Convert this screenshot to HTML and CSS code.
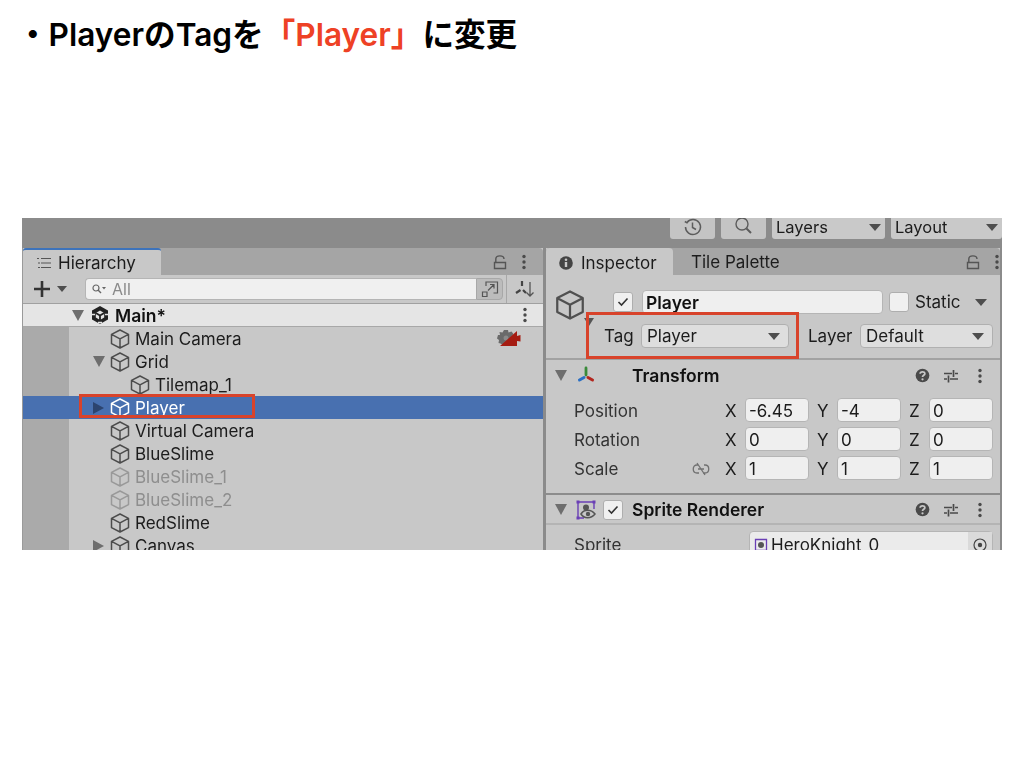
FILE: index.html
```html
<!DOCTYPE html>
<html lang="ja">
<head>
<meta charset="UTF-8">
<title>PlayerのTagを変更</title>
<link rel="stylesheet" href="styles.css">
</head>
<body>
<svg class="defs" width="0" height="0">
  <symbol id="cube" viewBox="0 0 20 20">
    <path d="M10 1 18.500 5.400V14.600L10 19 1.500 14.600V5.400Z M2 5.700 10 9.900 18 5.700 M10 9.900V18.700" fill="none" stroke="currentColor" stroke-width="1.500" stroke-linejoin="round"/>
  </symbol>
  <symbol id="kebab" viewBox="0 0 6 16">
    <circle cx="3" cy="2.500" r="1.700" fill="currentColor"/><circle cx="3" cy="8" r="1.700" fill="currentColor"/><circle cx="3" cy="13.500" r="1.700" fill="currentColor"/>
  </symbol>
  <symbol id="lock" viewBox="0 0 14 16">
    <path d="M1.500 8.500H12.500V14.500H1.500Z M2.800 8.500V5C2.800 .8 11 .8 11 5" fill="none" stroke="currentColor" stroke-width="1.400"/>
  </symbol>
  <symbol id="sliders" viewBox="0 0 16 16">
    <path d="M1 5.500H9 M12 5.500H15 M10.500 2V9 M1 11H4 M7 11H15 M5.500 7.500V14.500" fill="none" stroke="currentColor" stroke-width="1.700"/>
  </symbol>
  <symbol id="help" viewBox="0 0 16 16">
    <circle cx="8" cy="8" r="7.300" fill="currentColor"/>
    <path d="M5.500 6.200C5.600 3.400 10.500 3.400 10.500 6.100 10.500 7.800 8 7.800 8 9.600" fill="none" stroke="#c8c8c8" stroke-width="1.900"/>
    <circle cx="8" cy="12" r="1.200" fill="#c8c8c8"/>
  </symbol>
</svg>

<h1 class="title">・PlayerのTagを<span class="accent">「Player」</span>に変更</h1>

<div class="shot">
  <div class="toolbar">
    <div class="tool-btn tool-icon">
      <svg width="20" height="20" viewBox="0 0 20 20"><path d="M4 5.500A7.500 7.500 0 1 1 2.500 10 M1.800 4.500 4 5.800 5.600 3.600 M9.500 5.500V10.500L13 12.500" fill="none" stroke="#5c5c5c" stroke-width="1.500"/></svg>
    </div>
    <div class="tool-btn tool-icon">
      <svg width="20" height="20" viewBox="0 0 20 20"><circle cx="8" cy="7" r="6" fill="none" stroke="#5c5c5c" stroke-width="1.400"/><path d="M12.500 11.500 17 16" stroke="#5c5c5c" stroke-width="2"/></svg>
    </div>
    <div class="tool-btn tool-menu layers">Layers<i class="caret"></i></div>
    <div class="tool-btn tool-menu layout">Layout<i class="caret"></i></div>
  </div>

  <div class="panels">
    <section class="panel hierarchy">
      <div class="tabbar">
        <div class="tab tab-active tab-blue">
          <svg class="tab-icon" width="16" height="12" viewBox="0 0 16 12"><path d="M5 1.500H15 M5 6H15 M5 10.500H15 M1 1.500H3 M2 6H4 M2 10.500H4" stroke="#555" stroke-width="1.200"/></svg>
          Hierarchy
        </div>
        <div class="tab-tools">
          <svg class="lock-icon" width="14" height="16"><use href="#lock"/></svg>
          <svg class="kebab-icon" width="6" height="16"><use href="#kebab"/></svg>
        </div>
      </div>
      <div class="search-bar">
        <div class="add-btn">
          <svg width="18" height="18" viewBox="0 0 18 18"><path d="M9 1V17 M1 9H17" stroke="#333" stroke-width="2.600"/></svg>
          <i class="caret"></i>
        </div>
        <div class="search">
          <svg width="15" height="10" viewBox="0 0 15 10"><circle cx="4" cy="4" r="3" fill="none" stroke="#666" stroke-width="1.200"/><path d="M6 6 9 9" stroke="#666" stroke-width="1.400"/><path d="M10 3H14L12 5.500Z" fill="#666"/></svg>
          <span>All</span>
        </div>
        <div class="scene-vis">
          <svg width="18" height="18" viewBox="0 0 18 18"><path d="M5 6V2H16.500V13H12.500 M1.500 12H6V16.500H1.500Z M7 10.500 13 4.500 M9 4.500H13V8.500" fill="none" stroke="#555" stroke-width="1.200"/></svg>
        </div>
        <div class="sort-btn">
          <svg width="20" height="18" viewBox="0 0 20 18"><path d="M7 1V6 M1 13 5.500 10 M8 10 11 13" stroke="#444" stroke-width="2.200"/><path d="M15 2V16 M11.500 12.500 15 16 18.500 12.500" fill="none" stroke="#555" stroke-width="1.300"/></svg>
        </div>
      </div>
      <div class="scene-row">
        <i class="arrow-down"></i>
        <svg class="unity-logo" width="20" height="20" viewBox="0 0 20 20"><path d="M10 1 18 5.500V14.500L10 19 2 14.500V5.500Z" fill="#222"/><path d="M10 5.500 14.200 8V12.500L10 15 5.800 12.500V8Z" fill="#e5e5e5"/><path d="M10 10.500V15 M10 10.500 5.800 8 M10 10.500 14.200 8" stroke="#222" stroke-width="1.800"/><path d="M1 9.500H5 M15 9.500H19 M8 17.500H12" stroke="#e5e5e5" stroke-width="1.500"/></svg>
        <strong>Main*</strong>
        <svg class="kebab-icon scene-kebab" width="6" height="16"><use href="#kebab"/></svg>
      </div>
      <div class="tree">
        <div class="row"><svg class="cube" width="20" height="20"><use href="#cube"/></svg>Main Camera
          <svg class="gizmo" width="24" height="20" viewBox="0 0 24 20"><path d="M7 1H11L11.500 3.500 14.500 2.500 16.500 5 14 8 6 16 3.500 14.500 1.500 14 2 11 0 9.500 1 6 3 6 2.500 3 5.500 3.500Z" fill="#6a6a6a"/><circle cx="9" cy="9" r="2.500" fill="#8a8a8a"/><path d="M20 2V7L23.500 6V12.500L20 12V17H3Z" fill="#a51c12"/></svg>
        </div>
        <div class="row"><i class="arrow-down"></i><svg class="cube" width="20" height="20"><use href="#cube"/></svg>Grid</div>
        <div class="row depth2"><svg class="cube" width="20" height="20"><use href="#cube"/></svg>Tilemap_1</div>
        <div class="row selected"><i class="arrow-right"></i><svg class="cube" width="20" height="20"><use href="#cube"/></svg>Player
          <div class="mark mark-player"></div>
        </div>
        <div class="row"><svg class="cube" width="20" height="20"><use href="#cube"/></svg>Virtual Camera</div>
        <div class="row"><svg class="cube" width="20" height="20"><use href="#cube"/></svg>BlueSlime</div>
        <div class="row off"><svg class="cube" width="20" height="20"><use href="#cube"/></svg>BlueSlime_1</div>
        <div class="row off"><svg class="cube" width="20" height="20"><use href="#cube"/></svg>BlueSlime_2</div>
        <div class="row"><svg class="cube" width="20" height="20"><use href="#cube"/></svg>RedSlime</div>
        <div class="row"><i class="arrow-right"></i><svg class="cube" width="20" height="20"><use href="#cube"/></svg>Canvas</div>
      </div>
    </section>

    <section class="panel inspector">
      <div class="tabbar">
        <div class="tab tab-active tab-inspector">
          <svg class="tab-icon" width="14" height="14" viewBox="0 0 14 14"><circle cx="7" cy="7" r="6.800" fill="#444"/><rect x="5.800" y="6" width="2.400" height="5" fill="#c8c8c8"/><circle cx="7" cy="3.800" r="1.300" fill="#c8c8c8"/></svg>
          Inspector
        </div>
        <div class="tab tab-palette">Tile Palette</div>
        <div class="tab-tools">
          <svg class="lock-icon" width="14" height="16"><use href="#lock"/></svg>
          <svg class="kebab-icon" width="6" height="16"><use href="#kebab"/></svg>
        </div>
      </div>

      <div class="object">
        <div class="object-icon">
          <svg class="big-cube" width="30" height="30"><use href="#cube"/></svg>
          <i class="arrow-down small"></i>
        </div>
        <div class="object-body">
          <div class="object-name">
            <label class="check"><svg width="12" height="10" viewBox="0 0 12 10"><path d="M1.500 5 4.500 8 10.500 1.500" fill="none" stroke="#333" stroke-width="1.600"/></svg></label>
            <div class="name-input">Player</div>
            <label class="check static-check"></label>
            <span class="static-label">Static</span>
            <i class="caret"></i>
          </div>
          <div class="object-tags">
            <span class="tag-label">Tag</span>
            <div class="select tag-select">Player<i class="caret"></i></div>
            <span class="layer-label">Layer</span>
            <div class="select layer-select">Default<i class="caret"></i></div>
            <div class="mark mark-tag"></div>
          </div>
        </div>
      </div>

      <div class="comp-head">
        <i class="arrow-down"></i>
        <svg class="axes" width="20" height="20" viewBox="0 0 20 20"><path d="M10 2V9" stroke="#3a8a3a" stroke-width="2.800" stroke-linecap="round"/><path d="M8 11.500 3.500 14" stroke="#2a6fc4" stroke-width="3" stroke-linecap="round"/><path d="M12 11.500 16.500 14" stroke="#b3261e" stroke-width="3" stroke-linecap="round"/></svg>
        <strong class="comp-title comp-title-far">Transform</strong>
        <div class="comp-tools">
          <svg width="15" height="15" class="comp-help"><use href="#help"/></svg>
          <svg width="16" height="16"><use href="#sliders"/></svg>
          <svg class="kebab-icon" width="6" height="16"><use href="#kebab"/></svg>
        </div>
      </div>
      <div class="fields">
        <div class="field-label">Position</div>
        <div class="axis"><span>X</span><div class="num">-6.45</div></div>
        <div class="axis"><span>Y</span><div class="num">-4</div></div>
        <div class="axis"><span>Z</span><div class="num">0</div></div>
        <div class="field-label">Rotation</div>
        <div class="axis"><span>X</span><div class="num">0</div></div>
        <div class="axis"><span>Y</span><div class="num">0</div></div>
        <div class="axis"><span>Z</span><div class="num">0</div></div>
        <div class="field-label">Scale
          <svg width="18" height="14" viewBox="0 0 18 14"><path d="M6 3H5C0 3 0 11 5 11H7 M12 3H13C18 3 18 11 13 11H11 M6 7H12 M5 1 13 13" fill="none" stroke="#707070" stroke-width="1.300"/></svg>
        </div>
        <div class="axis"><span>X</span><div class="num">1</div></div>
        <div class="axis"><span>Y</span><div class="num">1</div></div>
        <div class="axis"><span>Z</span><div class="num">1</div></div>
      </div>

      <div class="comp-head comp-sprite">
        <i class="arrow-down"></i>
        <svg class="sprite-icon" width="20" height="20" viewBox="0 0 20 20"><path d="M2 2H18 M2 2V18H8 M18 2V9" fill="none" stroke="#6a3fb5" stroke-width="1.400"/><path d="M0.500 0.500H3.500V3.500H0.500Z M16.500 0.500H19.500V3.500H16.500Z M0.500 16.500H3.500V19.500H0.500Z" fill="#6a3fb5"/><circle cx="10" cy="7.500" r="3" fill="#555"/><path d="M5 14C8 9 15 9 19 14 15 19 8 19 5 14Z" fill="#c8c8c8" stroke="#555" stroke-width="1.500"/><circle cx="12" cy="14" r="2.200" fill="#555"/></svg>
        <label class="check"><svg width="12" height="10" viewBox="0 0 12 10"><path d="M1.500 5 4.500 8 10.500 1.500" fill="none" stroke="#333" stroke-width="1.600"/></svg></label>
        <strong class="comp-title">Sprite Renderer</strong>
        <div class="comp-tools">
          <svg width="15" height="15" class="comp-help"><use href="#help"/></svg>
          <svg width="16" height="16"><use href="#sliders"/></svg>
          <svg class="kebab-icon" width="6" height="16"><use href="#kebab"/></svg>
        </div>
      </div>
      <div class="sprite-row">
        <div class="field-label">Sprite</div>
        <div class="object-field">
          <svg width="14" height="14" viewBox="0 0 14 14"><path d="M1.500 1.500H12.500V12.500H1.500Z" fill="none" stroke="#6a3fb5" stroke-width="1.300"/><circle cx="7" cy="7" r="3" fill="#555"/></svg>
          <span>HeroKnight_0</span>
          <div class="picker"><svg width="14" height="14" viewBox="0 0 14 14"><circle cx="7" cy="7" r="6" fill="none" stroke="#444" stroke-width="1.200"/><circle cx="7" cy="7" r="2.200" fill="#444"/></svg></div>
        </div>
      </div>
    </section>
  </div>
</div>
</body>
</html>
```

FILE: styles.css
```css
body {
  margin: 0;
  background-color: #fff;
  font-family: Inter, "Noto Sans CJK JP", sans-serif;
  color: #1c1c1c;
}
.defs {
  display: block;
  height: 0;
}
.title {
  margin: 0;
  padding: 13px 0 0 17px;
  height: 218px;
  box-sizing: border-box;
  font-family: Inter, "Noto Sans CJK JP", sans-serif;
  font-size: 31.600px;
  line-height: 44px;
  font-weight: 600;
  color: #000;
}
.accent {
  color: #ee4125;
}

/* screenshot block */
.shot {
  margin-left: 22px;
  width: 980px;
  height: 332px;
  overflow: hidden;
  background-color: #8b8b8b;
  font-size: 17px;
  filter: blur(0.3px);
}
.toolbar {
  height: 30px;
  display: flex;
  justify-content: flex-end;
  gap: 6px;
}
.tool-btn {
  height: 21px;
  background-color: #c4c4c4;
  border-radius: 0 0 3px 3px;
  display: flex;
  align-items: center;
  box-sizing: border-box;
}
.tool-icon {
  width: 45px;
  justify-content: center;
}
.tool-icon svg {
  margin-top: -3px;
}
.tool-menu {
  padding: 0 4px 3px;
  justify-content: space-between;
  font-size: 16.500px;
  background-color: #c9c9c9;
}
.layers {
  width: 113px;
}
.layout {
  width: 111px;
}
.caret {
  display: inline-block;
  width: 0;
  height: 0;
  border-left: 6px solid transparent;
  border-right: 6px solid transparent;
  border-top: 7px solid #4e4e4e;
}
.panels {
  display: flex;
  gap: 3px;
  height: 302px;
}
.panel {
  background-color: #c8c8c8;
}
.hierarchy {
  width: 521px;
  border-left: 1px solid #9a9a9a;
  box-sizing: border-box;
}
.inspector {
  width: 454px;
}
.tabbar {
  height: 27px;
  background-color: #a5a5a5;
  border-radius: 4px 4px 0 0;
  display: flex;
  align-items: stretch;
}
.tab {
  display: flex;
  align-items: center;
  gap: 8px;
  padding-top: 1px;
  box-sizing: border-box;
}
.tab-active {
  background-color: #c8c8c8;
}
.tab-blue {
  width: 138px;
  padding-left: 13px;
  gap: 6px;
  border-top: 2px solid #3d73bb;
  border-radius: 3px 3px 0 0;
}
.tab-inspector {
  width: 127px;
  padding-left: 13px;
  padding-top: 2px;
  border-radius: 4px 4px 0 0;
}
.tab-palette {
  padding-left: 18px;
}
.tab-tools {
  margin-left: auto;
  display: flex;
  align-items: center;
  gap: 14px;
  padding-right: 16px;
  color: #555;
}
.inspector .tab-tools {
  padding-right: 0;
}
.kebab-icon {
  color: #4a4a4a;
}

/* hierarchy */
.search-bar {
  height: 29px;
  display: flex;
  align-items: center;
  border-bottom: 1px solid #a0a0a0;
  box-sizing: border-box;
}
.add-btn {
  width: 62px;
  display: flex;
  align-items: center;
  gap: 6px;
  padding-left: 10px;
  box-sizing: border-box;
}
.add-btn .caret {
  border-left-width: 5px;
  border-right-width: 5px;
  border-top-width: 6px;
}
.search {
  width: 391px;
  height: 22px;
  background-color: #f0f0f0;
  border: 1px solid #b5b5b5;
  border-right: 0;
  border-radius: 4px 0 0 4px;
  display: flex;
  align-items: center;
  gap: 5px;
  padding-left: 6px;
  box-sizing: border-box;
  color: #8a8a8a;
  font-size: 16px;
}
.scene-vis {
  width: 27px;
  height: 22px;
  background-color: #bcbcbc;
  border: 1px solid #a8a8a8;
  border-radius: 0 4px 4px 0;
  display: flex;
  align-items: center;
  justify-content: center;
  box-sizing: border-box;
}
.sort-btn {
  margin-left: 3px;
  flex: 1;
  height: 28px;
  border-left: 1px solid #a8a8a8;
  display: flex;
  align-items: center;
  justify-content: center;
}
.scene-row {
  height: 23px;
  background-color: #e5e5e5;
  border-bottom: 1px solid #a8a8a8;
  display: flex;
  align-items: center;
  box-sizing: border-box;
  padding-left: 49px;
  position: relative;
}
.scene-row strong {
  font-size: 17.500px;
  font-weight: 600;
  color: #111;
  margin-left: 5px;
}
.unity-logo {
  margin-left: 6px;
}
.scene-kebab {
  margin-left: auto;
  margin-right: 15px;
}
.arrow-down {
  display: inline-block;
  width: 0;
  height: 0;
  border-left: 6.500px solid transparent;
  border-right: 6.500px solid transparent;
  border-top: 11px solid #6e6e6e;
}
.arrow-right {
  display: inline-block;
  width: 0;
  height: 0;
  border-top: 6.500px solid transparent;
  border-bottom: 6.500px solid transparent;
  border-left: 11px solid #6e6e6e;
}
.tree {
  border-left: 46px solid #aaaaaa;
}
.row {
  height: 23px;
  display: flex;
  align-items: center;
  padding-left: 66px;
  position: relative;
  white-space: nowrap;
  color: #1c1c1c;
}
.cube {
  position: absolute;
  left: 41px;
  color: #4c4c4c;
}
.row .arrow-down,
.row .arrow-right {
  position: absolute;
  left: 24px;
}
.depth2 {
  padding-left: 86px;
}
.depth2 .cube {
  left: 61px;
}
.selected {
  background-color: #4870b0;
  color: #fff;
  margin-left: -46px;
  padding-left: 112px;
}
.selected .cube {
  left: 87px;
  color: #fff;
}
.selected .arrow-right {
  left: 70px;
  border-left-color: #2c446f;
}
.off {
  color: #8e8e8e;
}
.off .cube {
  color: #999;
}
.gizmo {
  position: absolute;
  right: 22px;
  top: 2px;
}
.mark {
  position: absolute;
  border: 3px solid #d8432b;
  box-sizing: border-box;
}
.mark-player {
  left: 56px;
  top: -2px;
  width: 176px;
  height: 24px;
}

/* inspector */
.object {
  height: 85px;
  display: flex;
  border-bottom: 2px solid #a2a2a2;
  box-sizing: border-box;
}
.object-icon {
  width: 40px;
  position: relative;
}
.big-cube {
  position: absolute;
  left: 9px;
  top: 15px;
  color: #505050;
}
.object-icon .small {
  position: absolute;
  left: 38px;
  top: 43px;
  border-left-width: 5px;
  border-right-width: 5px;
  border-top-width: 8px;
  border-top-color: #555;
}
.object-body {
  flex: 1;
  padding-top: 15px;
}
.object-name {
  display: flex;
  align-items: center;
  height: 24px;
  padding-left: 27px;
}
.check {
  width: 20px;
  height: 20px;
  background-color: #f0f0f0;
  border: 1px solid #aeaeae;
  border-radius: 3px;
  display: flex;
  align-items: center;
  justify-content: center;
  box-sizing: border-box;
  flex-shrink: 0;
}
.name-input {
  width: 241px;
  height: 24px;
  margin-left: 9px;
  padding-left: 3px;
  background-color: #efefef;
  border: 1px solid #b5b5b5;
  border-radius: 4px;
  box-sizing: border-box;
  font-weight: 600;
  font-size: 17.500px;
  line-height: 23px;
  color: #111;
}
.static-check {
  margin-left: 6px;
}
.static-label {
  margin-left: 6px;
  font-size: 17px;
}
.object-name .caret {
  margin-left: 14px;
}
.object-tags {
  display: flex;
  align-items: center;
  height: 24px;
  margin-top: 10px;
  padding-left: 18px;
  position: relative;
}
.tag-label {
  width: 37px;
}
.select {
  height: 24px;
  background-color: #dedede;
  border: 1px solid #b0b0b0;
  border-radius: 4px;
  display: flex;
  align-items: center;
  justify-content: space-between;
  padding: 0 8px 0 5px;
  box-sizing: border-box;
}
.tag-select {
  width: 148px;
}
.layer-label {
  margin-left: 19px;
  width: 52px;
}
.layer-select {
  width: 133px;
}
.mark-tag {
  left: 0;
  top: -12px;
  width: 213px;
  height: 47px;
}
.comp-head {
  height: 31px;
  display: flex;
  align-items: center;
  padding-left: 9px;
  box-sizing: border-box;
}
.comp-title {
  font-size: 17.500px;
  font-weight: 600;
  color: #111;
  margin-left: 9px;
}
.comp-title-far {
  margin-left: 36px;
}
.axes {
  margin-left: 9px;
}
.comp-tools {
  margin-left: auto;
  display: flex;
  align-items: center;
  gap: 18px;
  padding-right: 17px;
  color: #4a4a4a;
}
.comp-help {
  margin-right: -5px;
}
.fields {
  display: grid;
  grid-template-columns: 143px repeat(3, 84px);
  grid-auto-rows: 24px;
  align-content: start;
  column-gap: 8px;
  row-gap: 5px;
  padding: 7px 0 0 28px;
  height: 102px;
  box-sizing: border-box;
}
.field-label {
  display: flex;
  align-items: center;
  justify-content: space-between;
  font-size: 17px;
  color: #333;
  padding-right: 7px;
  padding-top: 1px;
}
.axis {
  display: flex;
  align-items: center;
}
.axis span {
  width: 20px;
  flex-shrink: 0;
  padding-top: 1px;
}
.num {
  flex: 1;
  height: 24px;
  padding-left: 3px;
  background-color: #efefef;
  border: 1px solid #b5b5b5;
  border-radius: 4px;
  box-sizing: border-box;
  line-height: 24px;
  font-size: 17px;
}
.comp-sprite {
  border-top: 2px solid #8c8c8c;
  border-bottom: 2px solid #b4b4b4;
  height: 32px;
  padding-top: 1px;
}
.sprite-icon {
  margin-left: 9px;
}
.comp-sprite .check {
  margin-left: 7px;
}
.sprite-row {
  display: flex;
  align-items: flex-start;
  padding: 6px 7px 0 28px;
}
.sprite-row .field-label {
  width: 175px;
  flex-shrink: 0;
  padding-right: 0;
  margin-top: 3px;
}
.object-field {
  flex: 1;
  height: 28px;
  display: flex;
  align-items: center;
  gap: 3px;
  padding-left: 4px;
  background-color: #ebebeb;
  border: 1px solid #b5b5b5;
  border-radius: 4px;
  box-sizing: border-box;
}
.picker {
  margin-left: auto;
  width: 24px;
  height: 26px;
  background-color: #dadada;
  display: flex;
  align-items: center;
  justify-content: center;
}
```
